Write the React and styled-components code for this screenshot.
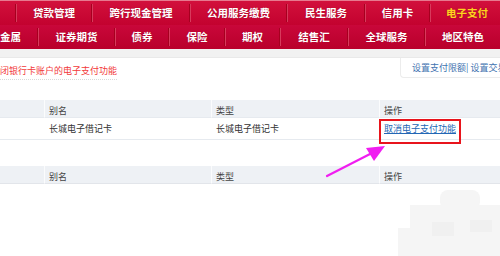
import React from "react";
import styled, { createGlobalStyle } from "styled-components";

const Global = createGlobalStyle`
  html, body { margin: 0; padding: 0; background: #fff; }
  body { font-family: "Noto Sans CJK SC", "Noto Sans", sans-serif; }
`;

const Page = styled.div`
  position: relative;
  width: 500px;
  height: 256px;
  overflow: hidden;
  background: #fff;
`;

const Nav = styled.div`
  display: flex;
  flex-direction: column;
  border-top: 1px solid #e7798f;
`;

const NavRow = styled.div`
  display: flex;
  align-items: center;
  height: ${(p) => p.$h}px;
  background: linear-gradient(${(p) => p.$top}, ${(p) => p.$bottom});
`;

const NavItem = styled.div`
  width: ${(p) => p.$w}px;
  flex: none;
  display: flex;
  justify-content: ${(p) => (p.$left ? "flex-start" : "center")};
  align-items: center;
  font-size: 10.5px;
  font-weight: 700;
  color: ${(p) => (p.$active ? "#ffd21f" : "#fff")};
  text-shadow: 0 0 1px rgba(120, 0, 20, 0.6);
  white-space: nowrap;
  line-height: 1;
`;

const NavDivider = styled.div`
  flex: none;
  width: 0;
  height: 18px;
  border-left: 1px solid #a6001f;
  border-right: 1px solid #d83a5c;
`;

const Strip = styled.div`
  height: 8px;
  background: #f1f1f1;
  border-bottom: 1px solid #e9e9e9;
`;

const InfoBar = styled.div`
  display: flex;
  justify-content: space-between;
  align-items: flex-start;
  height: 42px;
`;

const Notice = styled.div`
  margin-top: 7px;
  padding-bottom: 2px;
  font-size: 9px;
  line-height: 12px;
  color: #f23a3a;
  border-bottom: 1px dotted #d8d8d8;
  white-space: nowrap;
`;

const LinkBox = styled.div`
  display: flex;
  align-items: center;
  height: 19px;
  padding-left: 11px;
  width: 88px;
  border-left: 1px solid #ececec;
  border-bottom: 1px solid #ececec;
  border-bottom-left-radius: 4px;
  font-size: 9px;
  color: #3f73b0;
  white-space: nowrap;
  overflow: hidden;
`;

const Table = styled.div`
  display: grid;
  grid-template-columns: 44px 167px 168px 1fr;
`;

const HeadCell = styled.div`
  height: 18px;
  box-sizing: border-box;
  display: flex;
  align-items: center;
  padding: 4px 0 0 4px;
  background: #eef1f5;
  border-left: ${(p) => (p.$first ? "none" : "1px solid #fbfcfd")};
  border-bottom: 1px solid ${(p) => p.$line};
  font-size: 9px;
  color: #444;
`;

const Cell = styled.div`
  position: relative;
  height: 21px;
  display: flex;
  align-items: center;
  padding-left: 5px;
  border-bottom: 1px solid #e6eaef;
  font-size: 9px;
  color: #333;
  white-space: nowrap;
`;

const Link = styled.a`
  color: #2367b5;
  text-decoration: underline;
  font-size: 9px;
`;

const Highlight = styled.span`
  position: absolute;
  left: 0;
  top: 1px;
  width: 78px;
  height: 21px;
  border: 2px solid #e8141c;
  pointer-events: none;
`;

const Gap = styled.div`
  height: 26px;
`;

const Overlay = styled.svg`
  position: absolute;
  left: 0;
  top: 0;
  pointer-events: none;
`;

const row1 = [
  { w: 15 },
  { w: 74, t: "贷款管理" },
  { w: 96, t: "跨行现金管理" },
  { w: 95, t: "公用服务缴费" },
  { w: 76, t: "民生服务" },
  { w: 63, t: "信用卡" },
  { w: 72, t: "电子支付", active: true },
];

const row2 = [
  { w: 37, t: "金属", left: true },
  { w: 75, t: "证券期货" },
  { w: 52, t: "债券" },
  { w: 54, t: "保险" },
  { w: 53, t: "期权" },
  { w: 66, t: "结售汇" },
  { w: 75, t: "全球服务" },
  { w: 74, t: "地区特色" },
];

function Row({ items, ...rest }) {
  return (
    <NavRow {...rest}>
      {items.map((it, i) => (
        <React.Fragment key={i}>
          {i > 0 && <NavDivider />}
          <NavItem $w={it.w} $active={it.active} $left={it.left}>
            {it.t}
          </NavItem>
        </React.Fragment>
      ))}
    </NavRow>
  );
}

function Header({ line }) {
  return (
    <>
      <HeadCell $first $line={line} />
      <HeadCell $line={line}>别名</HeadCell>
      <HeadCell $line={line}>类型</HeadCell>
      <HeadCell $line={line}>操作</HeadCell>
    </>
  );
}

export default function App() {
  return (
    <Page>
      <Global />
      <Nav>
        <Row items={row1} $h={24} $top="#d2103c" $bottom="#c3022f" />
        <Row items={row2} $h={24} $top="#c9073a" $bottom="#b9002b" />
      </Nav>
      <Strip />
      <InfoBar>
        <Notice>闭银行卡账户的电子支付功能</Notice>
        <LinkBox>设置支付限额| 设置交易</LinkBox>
      </InfoBar>
      <Table>
        <Header line="#e6eaef" />
        <Cell />
        <Cell>长城电子借记卡</Cell>
        <Cell>长城电子借记卡</Cell>
        <Cell>
          <Link href="#">取消电子支付功能</Link>
          <Highlight />
        </Cell>
      </Table>
      <Gap />
      <Table>
        <Header line="#e2e5ea" />
      </Table>
      <Overlay width="500" height="256" viewBox="0 0 500 256">
        <g fill="#f5f5f5">
          <rect x="410" y="205" width="90" height="51" />
          <rect x="440" y="190" width="40" height="20" rx="8" />
          <rect x="398" y="228" width="20" height="28" />
        </g>
        <g fill="#f0f0f0">
          <rect x="432" y="222" width="22" height="14" />
          <rect x="470" y="220" width="22" height="12" />
        </g>
        <line x1="327" y1="176" x2="372" y2="153" stroke="#f01ef0" strokeWidth="2.2" strokeLinecap="round" />
        <polygon points="385,146 366,148 374,161" fill="#f01ef0" />
      </Overlay>
    </Page>
  );
}
